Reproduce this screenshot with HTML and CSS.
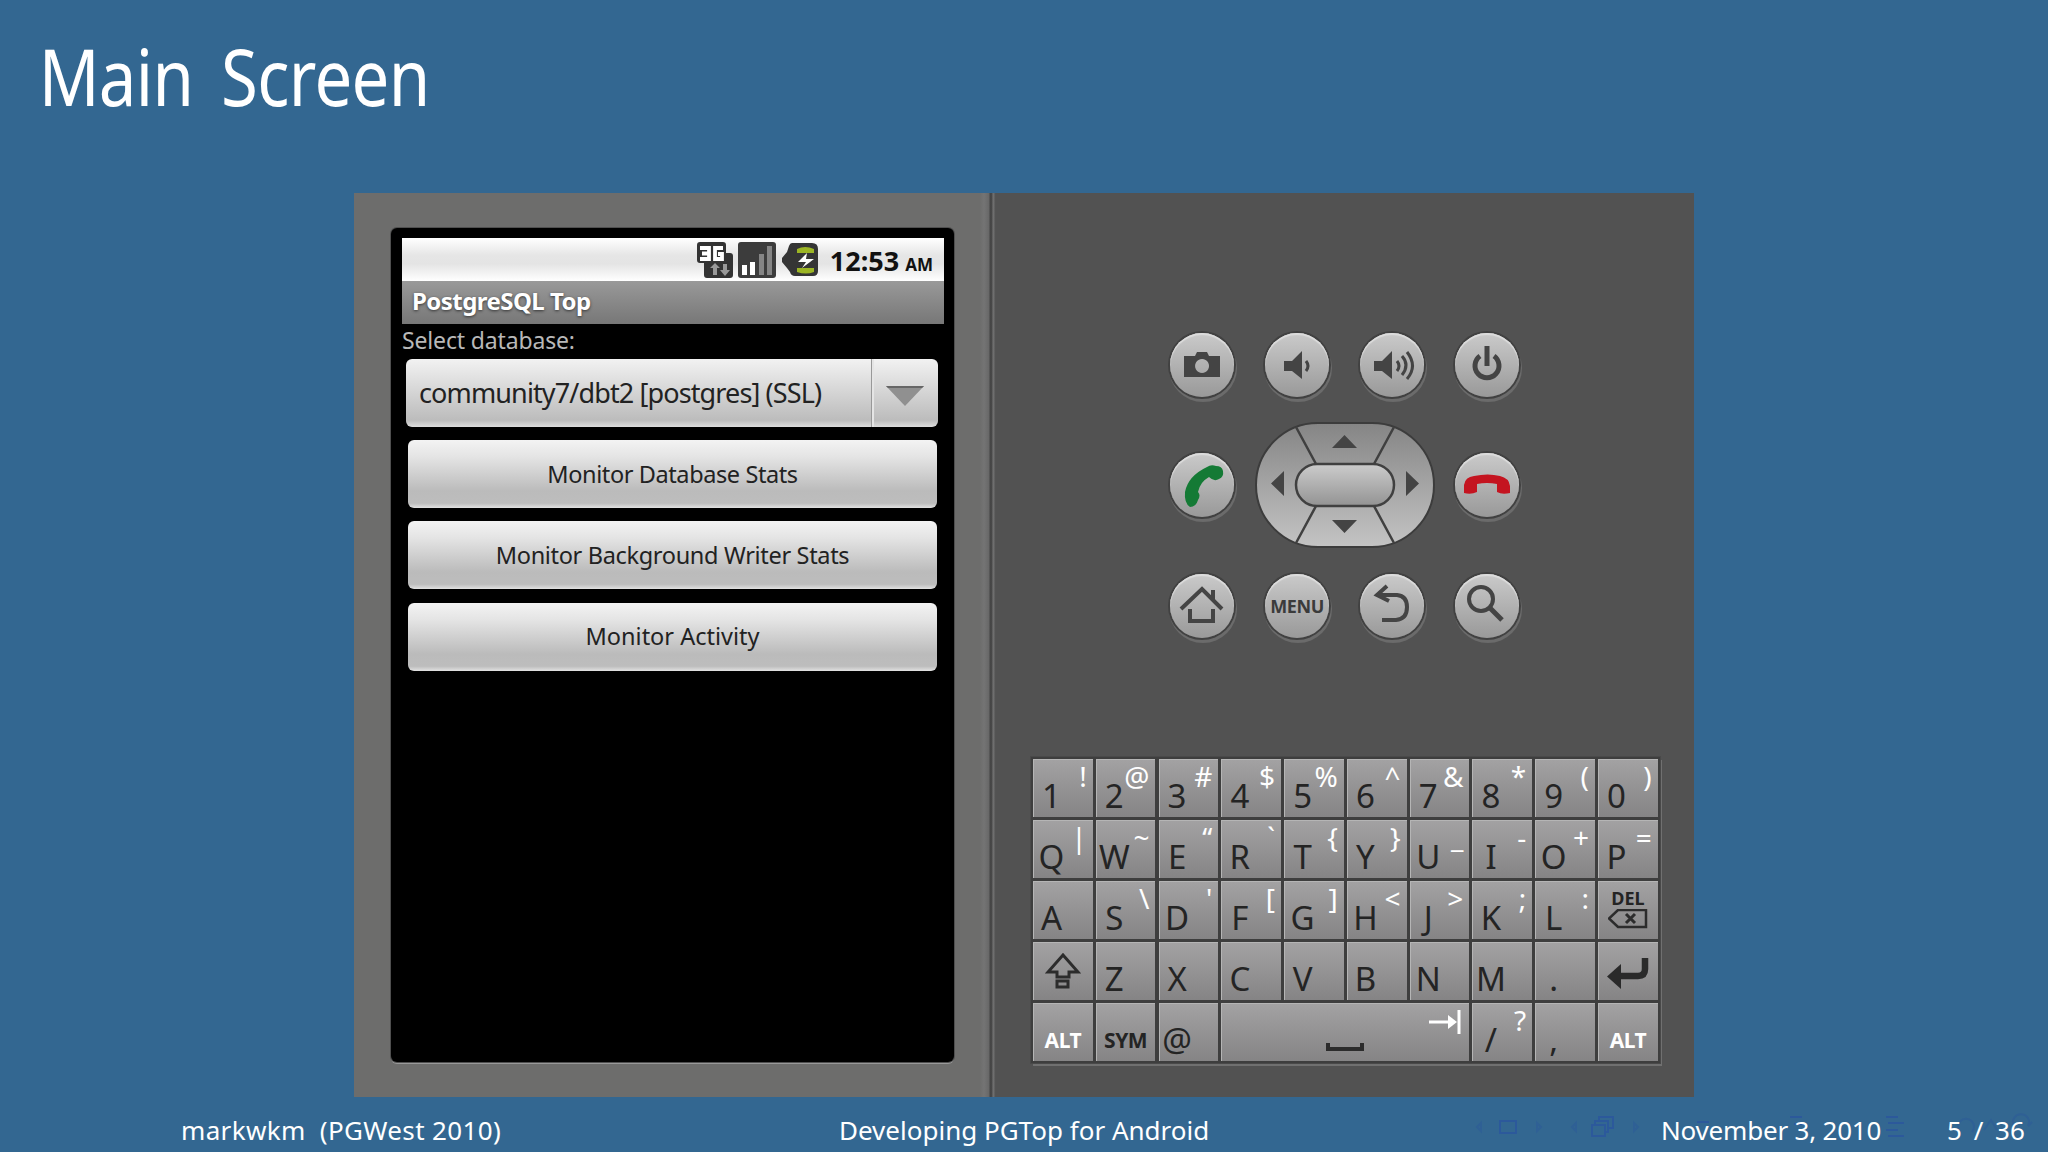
FILE: index.html
```html
<!DOCTYPE html>
<html>
<head>
  <meta charset="utf-8">
  <title>Main Screen</title>
  <link rel="stylesheet" href="styles.css">
</head>
<body>
  <h1>Main Screen</h1>

  <div class="emulator">
    <div class="phone">
      <div class="screen">
        <div class="status-bar">
          <svg class="icon-3g" width="36" height="36" viewBox="0 0 36 36">
            <path d="M3 0h23q3 0 3 3v8h4q3 0 3 3v19q0 3-3 3H10q-3 0-3-3V21H3q-3 0-3-3V3q0-3 3-3z" fill="#333"/>
            <path d="M3 6h9v11H3M5 11.500h7M26 6h-8v11h7v-5h-4" fill="none" stroke="#fff" stroke-width="3.8"/>
            <path d="M16 33V26h-3l5-5 5 5h-3v7zM26 22h4v6h3l-5 6-5-6h3z" fill="#999"/>
          </svg>
          <svg class="icon-signal" width="38" height="36" viewBox="0 0 38 36">
            <rect width="38" height="36" rx="3" fill="#3c3c3c"/>
            <path d="M4 23h5v10H4zM12 20h5v13h-5z" fill="#fff"/>
            <path d="M21 12h5v21h-5zM29 4h5v29h-5z" fill="#858585"/>
          </svg>
          <svg class="icon-battery" width="36" height="34" viewBox="0 0 36 34">
            <path d="M10 0h20q6 0 6 6v22q0 5-5 5H13q-4 0-5-4l-3-4-5-6v-4l5-6 2-6q1-3 3-3z" fill="#353535"/>
            <path d="M15 6q8-4 17 0v4H15zM15 25h17v4q-8 3-17 0z" fill="#9cb524"/>
            <path d="M25 10l-9 9h8l-4 6 12-9h-8z" fill="#fff"/>
          </svg>
          <span class="clock">12:53</span><span class="ampm">AM</span>
        </div>
        <div class="app-title">PostgreSQL Top</div>
        <div class="label">Select database:</div>
        <div class="spinner">
          <span>community7/dbt2 [postgres] (SSL)</span>
          <div class="spinner-arrow">
            <svg width="40" height="20" viewBox="0 0 40 20"><path d="M1 0h38L20 20z" fill="#909090"/><path d="M1 0h38l-2 2H3z" fill="#666"/></svg>
          </div>
        </div>
        <button class="db">Monitor Database Stats</button>
        <button class="writer">Monitor Background Writer Stats</button>
        <button class="activity">Monitor Activity</button>
      </div>
    </div>

    <div class="controls">
      <div class="pad">
        <div class="round"><svg viewBox="0 0 64 64"><path fill-rule="evenodd" d="M14 23h11l2-4h10l2 4h11v21H14zM32 26a7 7 0 1 0 .1 0z" fill="#444"/></svg></div>
        <div class="round"><svg viewBox="0 0 64 64"><path d="M19 28h8l10-10v28L27 38h-8z" fill="#444"/><path d="M41 28q4 5 0 10" class="line"/></svg></div>
        <div class="round"><svg viewBox="0 0 64 64"><path d="M14 28h8l10-10v28L22 38h-8z" fill="#444"/><path d="M37 28q4 5 0 10M42 23q8 9 0 19M47 19q11 14 0 27" class="line"/></svg></div>
        <div class="round"><svg viewBox="0 0 64 64"><path d="M25 23a12 12 0 1 0 14 0M32 13v20" class="line power"/></svg></div>

        <div class="round"><svg viewBox="0 0 64 64"><path d="M37 14q4-3 9-1 6 0 7 5 1 6-4 8-5 3-10-2-9 5-11 15 3 3 0 8-2 7-8 7-6-4-5-15Q18 23 37 14z" fill="#147a35"/></svg></div>
        <div class="dpad">
          <svg viewBox="0 0 180 126">
            <defs><linearGradient id="padFill" x2="0" y2="1"><stop offset="0" stop-color="#858585"/><stop offset="1" stop-color="#c4c4c4"/></linearGradient>
            <linearGradient id="okFill" x2="0" y2="1"><stop offset="0" stop-color="#ccc"/><stop offset="1" stop-color="#939393"/></linearGradient></defs>
            <rect x="1" y="1" width="178" height="124" rx="62" fill="url(#padFill)" stroke="#3c3c3c" stroke-width="2"/>
            <path d="M41 5l20 37M139 5l-20 37M41 121l20-37M139 121l-20-37" stroke="#404040" stroke-width="2.5"/>
            <rect x="41" y="42" width="98" height="42" rx="21" fill="url(#okFill)" stroke="#404040" stroke-width="2.5"/>
            <path d="M77 26l12.500-13 12.500 13zM77 98h25L89.500 111zM29 49v25L16 61.500zM151 49v25l13-12.500z" fill="#444"/>
          </svg>
        </div>
        <div class="round"><svg viewBox="0 0 64 64"><path d="M9 32q1-8 10-9 14-3 26 0 9 2 10 10v7q-8 2-13-1v-8q-10-2-20 0v8q-6 3-13 1z" fill="#c41420"/></svg></div>

        <div class="round"><svg viewBox="0 0 64 64"><path d="M11 35l21-20 20 20M43 16v10M20 35v12h23V35" class="line thick"/></svg></div>
        <div class="round menu">MENU</div>
        <div class="round"><svg viewBox="0 0 64 64"><path d="M27 12L17 21l12 6M18 21h19q10 1 10 12 0 12-11 13H22" class="line thick"/></svg></div>
        <div class="round"><svg viewBox="0 0 64 64"><circle cx="26" cy="25" r="12" class="line thick"/><path d="M34 33l13 13" class="line power"/></svg></div>
      </div>

      <div class="keyboard">
        <div class="key"><b>1</b><i>!</i></div>
        <div class="key"><b>2</b><i>@</i></div>
        <div class="key"><b>3</b><i>#</i></div>
        <div class="key"><b>4</b><i>$</i></div>
        <div class="key"><b>5</b><i>%</i></div>
        <div class="key"><b>6</b><i>^</i></div>
        <div class="key"><b>7</b><i>&amp;</i></div>
        <div class="key"><b>8</b><i>*</i></div>
        <div class="key"><b>9</b><i>(</i></div>
        <div class="key"><b>0</b><i>)</i></div>

        <div class="key"><b>Q</b><i>|</i></div>
        <div class="key"><b>W</b><i>~</i></div>
        <div class="key"><b>E</b><i>“</i></div>
        <div class="key"><b>R</b><i>`</i></div>
        <div class="key"><b>T</b><i>{</i></div>
        <div class="key"><b>Y</b><i>}</i></div>
        <div class="key"><b>U</b><i>_</i></div>
        <div class="key"><b>I</b><i>-</i></div>
        <div class="key"><b>O</b><i>+</i></div>
        <div class="key"><b>P</b><i>=</i></div>

        <div class="key"><b>A</b></div>
        <div class="key"><b>S</b><i>\</i></div>
        <div class="key"><b>D</b><i>'</i></div>
        <div class="key"><b>F</b><i>[</i></div>
        <div class="key"><b>G</b><i>]</i></div>
        <div class="key"><b>H</b><i>&lt;</i></div>
        <div class="key"><b>J</b><i>&gt;</i></div>
        <div class="key"><b>K</b><i>;</i></div>
        <div class="key"><b>L</b><i>:</i></div>
        <div class="key del"><span>DEL</span><svg width="40" height="20" viewBox="0 0 40 20"><path d="M10 1h28v17H10L1 9.500z" fill="none" stroke="#2c2c2c" stroke-width="2.500"/><path d="M18 5l9 9M27 5l-9 9" stroke="#2c2c2c" stroke-width="3"/></svg></div>

        <div class="key icon"><svg width="36" height="36" viewBox="0 0 36 36"><path d="M18 2l15 17H24v5H12v-5H3zM12 28h11v6H12z" fill="none" stroke="#2c2c2c" stroke-width="3"/></svg></div>
        <div class="key"><b>Z</b></div>
        <div class="key"><b>X</b></div>
        <div class="key"><b>C</b></div>
        <div class="key"><b>V</b></div>
        <div class="key"><b>B</b></div>
        <div class="key"><b>N</b></div>
        <div class="key"><b>M</b></div>
        <div class="key"><b>.</b></div>
        <div class="key icon enter"><svg width="42" height="34" viewBox="0 0 42 34"><path d="M38 2v11q0 7-7 7H10" fill="none" stroke="#2a2a2a" stroke-width="6.500"/><path d="M14 8v25L0 20.500z" fill="#2a2a2a"/></svg></div>

        <div class="key word light">ALT</div>
        <div class="key word">SYM</div>
        <div class="key"><b>@</b></div>
        <div class="key space">
          <svg viewBox="0 0 248 58"><path d="M107 40v6h34v-6" fill="none" stroke="#2c2c2c" stroke-width="4"/><path d="M208 19h22M238 7v24" stroke="#fff" stroke-width="3"/><path d="M227 12l9 7-9 7z" fill="#fff"/></svg>
        </div>
        <div class="key"><b>/</b><i>?</i></div>
        <div class="key"><b>,</b></div>
        <div class="key word light">ALT</div>
      </div>
    </div>
  </div>

  <div class="footer">
    <span class="author">markwkm&nbsp; (PGWest 2010)</span>
    <span class="talk">Developing PGTop for Android</span>
    <span class="date">November 3, 2010</span>
    <span class="page">5 / 36</span>
    <svg class="nav" width="578" height="40" viewBox="1470 1107 578 40">
      <path d="M1500 1121h16v12h-16zM1592 1125h13v11h-13zM1595 1125v-4h13v11h-3M1599 1121v-4h14v11h-5"/>
      <path d="M1697 1122h12M1790 1117h12M1794 1124h10M1886 1117h12M1888 1123h16M1886 1130h12M1888 1136h16"/>
      <path class="faint" d="M1481 1123l-4 4 4 4zM1537 1123l4 4-4 4zM1576 1123l-4 4 4 4zM1634 1123l4 4-4 4zM1960 1132a8 8 0 1 1 12 0M1984 1130l7-10 6 10M2014 1126a8 8 0 1 1 14 0l4-4"/>
    </svg>
  </div>
</body>
</html>
```

FILE: styles.css
```css
body {
  margin: 0;
  height: 1152px;
  overflow: hidden;
  background: #336791;
  font-family: "Noto Sans", "Open Sans", sans-serif;
}
h1 {
  margin: 0;
  height: 193px;
  padding: 20px 0 0 45px;
  box-sizing: border-box;
  font-size: 78px;
  line-height: 112px;
  font-weight: 400;
  color: #fff;
  letter-spacing: -0.8px;
  word-spacing: 13px;
  transform: scaleX(0.86);
  transform-origin: 0 0;
}
.emulator {
  display: flex;
  width: 1340px;
  height: 904px;
  margin-left: 354px;
  background: #525252;
}
.phone {
  width: 642px;
  box-sizing: border-box;
  padding: 35px 0 0 37px;
  background: linear-gradient(90deg, #6d6d6c 626px, #747474 630px, #686868 635px, #454545 636px, #484848 638px, #757575 639px, #4c4c4c 642px);
}
.screen {
  width: 563px;
  height: 834px;
  box-sizing: border-box;
  padding: 10px 10px 0 11px;
  background: #000;
  border-radius: 6px;
  box-shadow: 0 0 0 1px #4f4f4f, 0 2px 0 #999;
}
.status-bar {
  display: flex;
  height: 43px;
  padding-right: 11px;
  justify-content: flex-end;
  background: linear-gradient(#fff, #e6e6e6 40%, #e4e4e4 60%, #fff);
  font-weight: 700;
  color: #111;
}
.icon-3g {
  margin: 4px 5px 0 0;
}
.icon-signal {
  margin: 4px 6px 0 0;
}
.icon-battery {
  margin: 5px 12px 0 0;
}
.clock {
  font-size: 27px;
  line-height: 45px;
}
.ampm {
  margin-left: 6px;
  font-size: 17px;
  line-height: 53px;
}
.app-title {
  height: 43px;
  padding-left: 10px;
  background: linear-gradient(#999, #777);
  font-size: 24px;
  line-height: 40px;
  font-weight: 700;
  color: #fff;
  letter-spacing: -0.55px;
  text-shadow: 0 1px 3px #333;
}
.label {
  height: 35px;
  font-size: 23px;
  line-height: 33px;
  letter-spacing: -0.15px;
  color: #b8b8b8;
}
.spinner {
  display: flex;
  height: 68px;
  margin: 0 6px 13px 4px;
  justify-content: space-between;
  border-radius: 6px;
  background: linear-gradient(#f2f2f2, #bcbcbc 90%, #ddd);
}
.spinner span {
  padding-left: 13px;
  font-size: 27px;
  line-height: 67px;
  letter-spacing: -0.88px;
  color: #222;
}
.spinner-arrow {
  display: flex;
  width: 66px;
  align-items: center;
  justify-content: center;
  border-left: 1px solid #999;
  box-shadow: inset 2px 0 0 #e5e5e5;
}
.spinner-arrow svg {
  margin-top: 5px;
}
button {
  display: block;
  width: 529px;
  height: 68px;
  margin: 0 0 13.3px 6px;
  padding: 0;
  border: none;
  border-radius: 6px;
  background: linear-gradient(#f3f3f3, #e4e4e4 25%, #bbb 75%, #bdbdbd 93%, #e2e2e2);
  font-family: inherit;
  font-size: 23.5px;
  color: #222;
}
.db {
  letter-spacing: -0.4px;
}
.writer {
  letter-spacing: -0.33px;
}
.activity {
  padding-bottom: 1px;
}
.controls {
  width: 698px;
}
.pad {
  display: grid;
  grid-template-columns: repeat(4, 64px);
  grid-auto-rows: 64px;
  column-gap: 31px;
  row-gap: 56.5px;
  margin: 139.5px 0 0 174px;
}
.round {
  border-radius: 50%;
  background: linear-gradient(#cacaca, #999);
  box-shadow: 0 0 0 2px #414141, 1px 3px 0 2px #6b6b6b, inset 0 2px 1px #ddd;
}
.round svg {
  display: block;
}
.line {
  fill: none;
  stroke: #444;
  stroke-width: 3;
}
.thick {
  stroke-width: 4;
}
.power {
  stroke-width: 5;
}
.menu {
  text-align: center;
  font-size: 18px;
  line-height: 64px;
  font-weight: 700;
  letter-spacing: -0.4px;
  color: #3b3b3b;
}
.dpad {
  grid-column: span 2;
  width: 180px;
  height: 126px;
  margin: -31px 0 0 -10px;
}
.keyboard {
  display: grid;
  grid-template-columns: repeat(10, 59.7px);
  grid-auto-rows: 58px;
  gap: 3.1px;
  width: 625px;
  margin: 119px 0 0 35px;
  padding: 2px;
  background: #3e3e3e;
  box-shadow: 0 0 0 1px #494949, 2px 3px 0 #707070;
}
.key {
  display: flex;
  justify-content: space-between;
  background: linear-gradient(#a3a2a3, #858485);
  box-shadow: inset 1px 1px 0 #b5b5b5;
  color: #242424;
}
.key b {
  width: 37px;
  font-size: 33px;
  line-height: 73px;
  font-weight: 400;
  text-align: center;
}
.key i {
  margin: 0 6px 0 -20px;
  font-size: 28px;
  line-height: 35px;
  font-style: normal;
  color: #fff;
}
.key.icon {
  align-items: center;
  justify-content: center;
}
.key.enter {
  padding-top: 4px;
  height: 54px;
}
.key.word {
  justify-content: center;
  font-size: 21px;
  line-height: 75px;
  font-weight: 700;
  letter-spacing: -0.5px;
}
.key.light {
  color: #fff;
}
.key.space {
  grid-column: span 4;
}
.key.del {
  flex-direction: column;
  align-items: center;
  justify-content: flex-start;
  font-size: 18px;
  line-height: 18px;
  font-weight: 700;
}
.del span {
  padding: 8px 0 2px;
}
.footer {
  position: relative;
  display: flex;
  height: 55px;
  font-size: 26px;
  line-height: 67px;
  color: #fff;
  white-space: nowrap;
}
.author {
  width: 658px;
  padding-left: 181px;
  letter-spacing: 0.35px;
}
.talk {
  width: 822px;
}
.date {
  width: 286px;
  letter-spacing: -0.2px;
}
.page {
  word-spacing: 5px;
}
.page,
.date {
  z-index: 1;
}
.nav {
  position: absolute;
  left: 1470px;
  top: 10px;
  fill: none;
  stroke: #2c599b;
  stroke-width: 2;
}
.faint {
  stroke: #2f6095;
}
```
